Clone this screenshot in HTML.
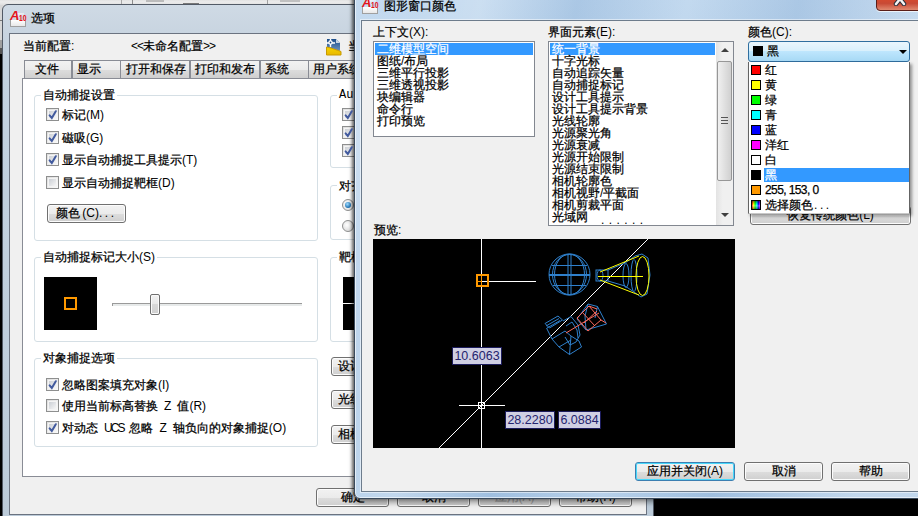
<!DOCTYPE html>
<html><head><meta charset="utf-8">
<style>
*{box-sizing:border-box}
html,body{margin:0;padding:0}
body{width:918px;height:516px;overflow:hidden;position:relative;background:#000;font-family:"Liberation Sans",sans-serif;font-size:12px;color:#000;-webkit-text-stroke:0.25px currentColor;word-spacing:2.7px}
.a{position:absolute}
.t{position:absolute;white-space:nowrap;line-height:12px;font-size:12px}
.gb{position:absolute;border:1px solid #d5dfe5;border-radius:3px}
.gl{position:absolute;background:#fff;padding:0 2px;line-height:12px;white-space:nowrap}
.cb{position:absolute;width:13px;height:13px;border:1px solid #8e8f8f;background:linear-gradient(135deg,#dcdcdc,#fbfbfb)}
.cb::after{content:"";position:absolute;left:1px;top:1px;right:1px;bottom:1px;border:1px solid #f4f4f4;background:linear-gradient(135deg,#cbcfd5,#f6f6f6)}
.cb.on svg{position:absolute;left:1px;top:1px;z-index:2}
.btn{position:absolute;height:19px;border:1px solid #707070;border-radius:3px;background:linear-gradient(#f2f2f2 0,#ebebeb 50%,#dddddd 51%,#cfcfcf 100%);box-shadow:inset 0 0 0 1px #fcfcfc;text-align:center;line-height:16px;white-space:nowrap}
.tab{position:absolute;top:60px;height:18px;border:1px solid #898c95;border-bottom:none;background:linear-gradient(#f2f2f2 0,#ebebeb 50%,#dddddd 51%,#cfcfcf 100%);line-height:16px;padding-left:10px;white-space:nowrap}
.lab{-webkit-text-stroke:0;height:18px;border:1px solid #1c1c5c;background:#cfcfe3;color:#24246e;font-size:12.5px;line-height:17px;text-align:center}
.l{-webkit-text-stroke:0}
.sw{position:absolute;width:10px;height:10px;border:1px solid #000}
</style></head><body>

<!-- background window strip on top -->
<div class="a" style="left:0;top:0;width:918px;height:5px;background:linear-gradient(#e2e2e2,#ececec 40%,#dedede)"></div>
<div class="a" style="left:121px;top:0;width:1px;height:5px;background:#a8a8a8"></div>
<div class="a" style="left:132px;top:0;width:1px;height:5px;background:#8c8c8c"></div>
<div class="a" style="left:267px;top:0;width:1px;height:5px;background:#a0a0a0"></div>
<div class="a" style="left:183px;top:3px;width:16px;height:1px;background:#777"></div>
<div class="a" style="left:146px;top:0;width:18px;height:2px;background:#bbb"></div>
<div class="a" style="left:280px;top:0;width:20px;height:2px;background:#c0c0c0"></div>
<div class="a" style="left:0;top:5px;width:30px;height:43px;background:#d6d6d6"></div><div class="a" style="left:0;top:20px;width:3px;height:1px;background:#777"></div><div class="a" style="left:0;top:40px;width:3px;height:8px;background:#a0a0a0"></div><div class="a" style="left:0;top:48px;width:3px;height:6px;background:#555"></div>

<!-- ================= LEFT DIALOG ================= -->
<div class="a" style="left:2px;top:4px;width:652px;height:520px;border:1px solid #525a66;border-radius:6px 6px 0 0;background:linear-gradient(#cfdae5,#c8d4e0 30px,#c3d2e0 60px,#bccbd9);"></div>
<!-- title -->
<div class="a" style="left:10px;top:11px;width:16px;height:16px">
  <div class="a" style="left:0;top:9px;width:16px;height:7px;background:linear-gradient(#fff,#e8e8e8);border:1px solid #a0a0a0;border-top:none"></div>
  <div class="a" style="left:5px;top:2px;width:9px;height:7px;background:linear-gradient(160deg,rgba(255,255,255,.9),rgba(255,255,255,0) 70%)"></div>
  <div class="a" style="left:0;top:-1px;font:italic bold 13px 'Liberation Sans',sans-serif;color:#e4141c;line-height:12px;-webkit-text-stroke:0">A</div>
  <div class="a" style="left:9px;top:3px;font-family:'Liberation Sans',sans-serif;font-weight:bold;font-size:9px;color:#e4141c;line-height:8px;transform:scaleX(.75);transform-origin:0 0;-webkit-text-stroke:0">10</div>
</div>
<div class="t" style="left:31px;top:12px">选项</div>
<!-- client -->
<div class="a" style="left:9px;top:33px;width:638px;height:482px;border:1px solid #6b7380;background:#f0f0f0"></div>

<div class="t" style="left:23px;top:40px">当前配置<span class="l">:</span></div>
<div class="t" style="left:131px;top:40px"><span class="l" style="letter-spacing:-1px">&lt;&lt;</span>未命名配置<span class="l" style="letter-spacing:-1px">&gt;&gt;</span></div>
<div class="t" style="left:348px;top:40px">当</div>
<svg class="a" style="left:326px;top:39px" width="16" height="17" viewBox="0 0 16 17"><defs><linearGradient id="bg1" x1="0" y1="0" x2="0" y2="1"><stop offset="0" stop-color="#1d4e8a"/><stop offset="1" stop-color="#6d93bf"/></linearGradient><linearGradient id="yg1" x1="0" y1="0" x2="0" y2="1"><stop offset="0" stop-color="#f7d400"/><stop offset="1" stop-color="#e8b800"/></linearGradient></defs><path d="M1 0 L10 0 L14 4 L14 12 L1 8 Z" fill="url(#bg1)"/><path d="M10 0 L14 4 L10 4 Z" fill="#c9d6e4"/><path d="M0 4 L9 4 M4.5 0 L4.5 8" stroke="#fff" stroke-width="1.4"/><circle cx="4.5" cy="3.5" r="2.2" fill="#fff"/><circle cx="4.5" cy="3.5" r="0.9" fill="#1d4e8a"/><path d="M0.5 8 L5 9 L15 12.5 L15 16 L0.5 16 Z" fill="url(#yg1)" stroke="#c89a00" stroke-width="1"/></svg>

<!-- tabs -->
<div class="tab" style="left:24px;width:48px;padding-left:10px">文件</div>
<div class="tab" style="left:72px;width:49px;padding-left:4px">显示</div>
<div class="tab" style="left:120px;width:70px;padding-left:5px">打开和保存</div>
<div class="tab" style="left:190px;width:70px;padding-left:4px">打印和发布</div>
<div class="tab" style="left:260px;width:49px;padding-left:4px">系统</div>
<div class="tab" style="left:308px;width:90px;padding-left:4px">用户系统配置</div>
<!-- tab page -->
<div class="a" style="left:22px;top:78px;width:620px;height:399px;border:1px solid #898c95;background:#fff"></div>

<!-- group 1 -->
<div class="gb" style="left:34px;top:95px;width:284px;height:146px"></div>
<div class="gl" style="left:41px;top:89px">自动捕捉设置</div>
<div class="cb on" style="left:46px;top:108px"><svg width="11" height="11" viewBox="0 0 11 11"><path d="M1.6 5.4 L3.8 8 L7.8 1.2" stroke="#425a9e" stroke-width="2" fill="none" stroke-linecap="round"/></svg></div>
<div class="t" style="left:62px;top:109px">标记<span class="l">(M)</span></div>
<div class="cb on" style="left:46px;top:131px"><svg width="11" height="11" viewBox="0 0 11 11"><path d="M1.6 5.4 L3.8 8 L7.8 1.2" stroke="#425a9e" stroke-width="2" fill="none" stroke-linecap="round"/></svg></div>
<div class="t" style="left:62px;top:132px">磁吸<span class="l">(G)</span></div>
<div class="cb on" style="left:46px;top:153px"><svg width="11" height="11" viewBox="0 0 11 11"><path d="M1.6 5.4 L3.8 8 L7.8 1.2" stroke="#425a9e" stroke-width="2" fill="none" stroke-linecap="round"/></svg></div>
<div class="t" style="left:62px;top:154px">显示自动捕捉工具提示<span class="l">(T)</span></div>
<div class="cb" style="left:46px;top:176px"></div>
<div class="t" style="left:62px;top:177px">显示自动捕捉靶框<span class="l">(D)</span></div>
<div class="btn" style="left:47px;top:204px;width:79px">颜色<span class="l" style="margin-left:2px">(C)</span><span class="l" style="letter-spacing:2.6px">...</span></div>

<!-- group 2 -->
<div class="gb" style="left:34px;top:257px;width:284px;height:85px"></div>
<div class="gl" style="left:41px;top:251px">自动捕捉标记大小<span class="l">(S)</span></div>
<div class="a" style="left:44px;top:277px;width:53px;height:53px;background:#000"></div>
<div class="a" style="left:64px;top:297px;width:13px;height:13px;border:2px solid #ff9900"></div>
<div class="a" style="left:112px;top:303px;width:190px;height:3px;border-top:1px solid #9a9a9a;border-left:1px solid #9a9a9a;background:#e7eaea"></div>
<div class="a" style="left:150px;top:294px;width:10px;height:21px;border:1px solid #6f6f6f;border-radius:2px;background:linear-gradient(#f2f2f2,#e8e8e8 45%,#d8d8d8 50%,#d0d0d0);box-shadow:inset 0 0 0 1px #fafafa"></div>

<!-- group 3 -->
<div class="gb" style="left:34px;top:358px;width:284px;height:89px"></div>
<div class="gl" style="left:41px;top:352px">对象捕捉选项</div>
<div class="cb on" style="left:46px;top:378px"><svg width="11" height="11" viewBox="0 0 11 11"><path d="M1.6 5.4 L3.8 8 L7.8 1.2" stroke="#425a9e" stroke-width="2" fill="none" stroke-linecap="round"/></svg></div>
<div class="t" style="left:62px;top:379px">忽略图案填充对象<span class="l">(I)</span></div>
<div class="cb" style="left:46px;top:399px"></div>
<div class="t" style="left:62px;top:400px">使用当前标高替换 <span class="l">Z</span> 值<span class="l">(R)</span></div>
<div class="cb on" style="left:46px;top:421px"><svg width="11" height="11" viewBox="0 0 11 11"><path d="M1.6 5.4 L3.8 8 L7.8 1.2" stroke="#425a9e" stroke-width="2" fill="none" stroke-linecap="round"/></svg></div>
<div class="t" style="left:62px;top:422px">对动态 <span class="l" style="letter-spacing:-2px">UCS</span> 忽略 <span class="l">Z</span> 轴负向的对象捕捉<span class="l">(O)</span></div>

<!-- right column groups -->
<div class="gb" style="left:330px;top:95px;width:120px;height:73px"></div>
<div class="gl" style="left:337px;top:89px;font-family:'Liberation Mono',monospace"><span class="l">AutoTrack</span> 设置</div>
<div class="cb on" style="left:342px;top:108px"><svg width="11" height="11" viewBox="0 0 11 11"><path d="M1.6 5.4 L3.8 8 L7.8 1.2" stroke="#425a9e" stroke-width="2" fill="none" stroke-linecap="round"/></svg></div>
<div class="cb on" style="left:342px;top:126px"><svg width="11" height="11" viewBox="0 0 11 11"><path d="M1.6 5.4 L3.8 8 L7.8 1.2" stroke="#425a9e" stroke-width="2" fill="none" stroke-linecap="round"/></svg></div>
<div class="cb on" style="left:342px;top:144px"><svg width="11" height="11" viewBox="0 0 11 11"><path d="M1.6 5.4 L3.8 8 L7.8 1.2" stroke="#425a9e" stroke-width="2" fill="none" stroke-linecap="round"/></svg></div>
<div class="gb" style="left:330px;top:185px;width:120px;height:55px"></div>
<div class="gl" style="left:337px;top:180px">对齐点获取</div>
<div class="a" style="left:342px;top:199px;width:12px;height:12px;border-radius:50%;border:1px solid #8e8f8f;background:radial-gradient(circle at 40% 40%,#fff,#d8d8d8)"><div class="a" style="left:2px;top:2px;width:6px;height:6px;border-radius:50%;background:radial-gradient(circle at 40% 35%,#9fdcff,#1c6fb0 70%,#0b4a80)"></div></div>
<div class="a" style="left:342px;top:220px;width:12px;height:12px;border-radius:50%;border:1px solid #8e8f8f;background:radial-gradient(circle at 40% 40%,#fff,#cfcfcf)"></div>
<div class="gb" style="left:330px;top:257px;width:120px;height:85px"></div>
<div class="gl" style="left:337px;top:251px">靶框大小<span class="l">(Z)</span></div>
<div class="a" style="left:343px;top:277px;width:53px;height:53px;background:#000"><div class="a" style="left:0;top:26px;width:53px;height:1px;background:#fff"></div></div>
<div class="btn" style="left:331px;top:357px;width:120px;text-align:left;padding-left:6px">设计工具提示设置<span class="l">(E)...</span></div>
<div class="btn" style="left:331px;top:390px;width:120px;text-align:left;padding-left:6px">光线轮廓设置<span class="l">(L)...</span></div>
<div class="btn" style="left:331px;top:425px;width:120px;text-align:left;padding-left:6px">相机轮廓设置<span class="l">(A)...</span></div>

<!-- bottom buttons -->
<div class="btn" style="left:316px;top:488px;width:73px">确定</div>
<div class="btn" style="left:397px;top:488px;width:73px">取消</div>
<div class="btn" style="left:478px;top:488px;width:73px;color:#a0a0a0">应用<span class="l">(A)</span></div>
<div class="btn" style="left:559px;top:488px;width:73px">帮助<span class="l">(H)</span></div>

<!-- ================= RIGHT DIALOG ================= -->
<div id="rd" class="a" style="left:354px;top:-30px;width:600px;height:529px;border:1px solid #3a4a5c;background:linear-gradient(100deg,rgba(255,255,255,.15) 10%,rgba(255,255,255,.25) 19%,rgba(60,110,170,.12) 33%,rgba(255,255,255,.12) 49%,rgba(60,110,170,.12) 65%,rgba(255,255,255,.25) 86%),linear-gradient(#bcd5ee,#b9d3ec 50px,#c8dcf0 130px,#b7d0ea 280px,#adcae7);border-radius:6px;box-shadow:-2px 0 3px rgba(0,0,0,.45),-1px 4px 5px rgba(0,0,0,.35),inset 0 0 0 1px rgba(255,255,255,.6)"></div>
<div class="a" style="left:361px;top:20px;width:600px;height:472px;border:1px solid #6d7c8c;background:#f0f0f0;box-shadow:0 0 0 1px rgba(255,255,255,.5)"></div>

<!-- title -->
<div class="a" style="left:362px;top:-2px;width:16px;height:16px">
  <div class="a" style="left:0;top:9px;width:16px;height:7px;background:linear-gradient(#fff,#e8e8e8);border:1px solid #a0a0a0;border-top:none"></div>
  <div class="a" style="left:5px;top:2px;width:9px;height:7px;background:linear-gradient(160deg,rgba(255,255,255,.9),rgba(255,255,255,0) 70%)"></div>
  <div class="a" style="left:0;top:-1px;font:italic bold 13px 'Liberation Sans',sans-serif;color:#e4141c;line-height:12px;-webkit-text-stroke:0">A</div>
  <div class="a" style="left:9px;top:3px;font-family:'Liberation Sans',sans-serif;font-weight:bold;font-size:9px;color:#e4141c;line-height:8px;transform:scaleX(.75);transform-origin:0 0;-webkit-text-stroke:0">10</div>
</div>
<div class="t" style="left:384px;top:0px">图形窗口颜色</div>
<div class="a" style="left:876px;top:-13px;width:60px;height:24px;border:1px solid #5a1e18;border-radius:0 0 4px 4px;background:linear-gradient(#e8a08a,#d24a30 55%,#c84a35 70%,#e08a70);box-shadow:0 1px 0 rgba(255,255,255,.7)"></div>
<svg class="a" style="left:893px;top:-7px" width="14" height="13" viewBox="0 0 14 13"><path d="M3 1 L11 11 M11 1 L3 11" stroke="#2a2f3a" stroke-width="4.5" stroke-linecap="round"/><path d="M3 1 L11 11 M11 1 L3 11" stroke="#f4f4f4" stroke-width="2.5" stroke-linecap="round"/></svg>

<div class="t" style="left:373px;top:26px">上下文<span class="l">(X):</span></div>
<div class="a" style="left:373px;top:41px;width:162px;height:96px;border:1px solid #828790;background:#fff"></div>
<div class="a" style="left:375px;top:43px;width:158px;height:12px;background:#3399ff"></div>
<div class="t" style="left:377px;top:43px;color:#fff">二维模型空间</div>
<div class="t" style="left:377px;top:55px">图纸<span class="l">/</span>布局</div>
<div class="t" style="left:377px;top:67px">三维平行投影</div>
<div class="t" style="left:377px;top:79px">三维透视投影</div>
<div class="t" style="left:377px;top:91px">块编辑器</div>
<div class="t" style="left:377px;top:103px">命令行</div>
<div class="t" style="left:377px;top:115px">打印预览</div>

<div class="t" style="left:548px;top:26px">界面元素<span class="l">(E):</span></div>
<div class="a" style="left:548px;top:41px;width:186px;height:185px;border:1px solid #828790;background:#fff"></div>
<div class="a" style="left:550px;top:43px;width:165px;height:12px;background:#3399ff"></div>
<div class="t" style="left:552px;top:43px;color:#fff">统一背景</div>
<div class="t" style="left:552px;top:55px">十字光标</div>
<div class="t" style="left:552px;top:67px">自动追踪矢量</div>
<div class="t" style="left:552px;top:79px">自动捕捉标记</div>
<div class="t" style="left:552px;top:91px">设计工具提示</div>
<div class="t" style="left:552px;top:103px">设计工具提示背景</div>
<div class="t" style="left:552px;top:115px">光线轮廓</div>
<div class="t" style="left:552px;top:127px">光源聚光角</div>
<div class="t" style="left:552px;top:139px">光源衰减</div>
<div class="t" style="left:552px;top:151px">光源开始限制</div>
<div class="t" style="left:552px;top:163px">光源结束限制</div>
<div class="t" style="left:552px;top:175px">相机轮廓色</div>
<div class="t" style="left:552px;top:187px">相机视野<span class="l">/</span>平截面</div>
<div class="t" style="left:552px;top:199px">相机剪裁平面</div>
<div class="t" style="left:552px;top:211px">光域网</div><div class="t l" style="left:601px;top:214px;letter-spacing:4.4px;height:11px;overflow:hidden">......</div>
<!-- scrollbar -->
<div class="a" style="left:716px;top:42px;width:17px;height:183px;background:linear-gradient(90deg,#e3e3e3,#f0f0f0 40%,#f0f0f0)"></div>
<div class="a" style="left:721px;top:48px;width:0;height:0;border-left:4px solid transparent;border-right:4px solid transparent;border-bottom:4px solid #404040"></div>
<div class="a" style="left:717px;top:61px;width:15px;height:120px;border:1px solid #979797;border-radius:2px;background:linear-gradient(90deg,#f0f0f0,#e0e0e0 50%,#d0d0d0)"></div>
<div class="a" style="left:721px;top:117px;width:7px;height:7px;border-top:1px solid #555;border-bottom:1px solid #555"><div class="a" style="left:0;top:2px;width:7px;height:1px;background:#555"></div></div>
<div class="a" style="left:721px;top:213px;width:0;height:0;border-left:4px solid transparent;border-right:4px solid transparent;border-top:4px solid #404040"></div>

<div class="t" style="left:748px;top:26px">颜色<span class="l">(C):</span></div>
<!-- button behind dropdown -->
<div class="btn" style="left:750px;top:206px;width:161px">恢复传统颜色<span class="l">(L)</span></div>

<!-- combobox -->
<div class="a" style="left:748px;top:41px;width:162px;height:21px;border:1px solid #2f6e9f;border-radius:3px;background:linear-gradient(#eaf6fd 0,#d9f0fc 45%,#bee6fd 50%,#a7d9f5 100%)"></div>
<div class="sw" style="left:753px;top:46px;background:#000"></div>
<div class="t" style="left:767px;top:45px">黑</div>
<div class="a" style="left:899px;top:50px;width:0;height:0;border-left:4px solid transparent;border-right:4px solid transparent;border-top:4px solid #000"></div>
<!-- dropdown -->
<div class="a" style="left:748px;top:62px;width:162px;height:152px;border:1px solid #646464;border-top:none;border-bottom-color:#c8c8c8;background:#fff;box-shadow:2px 2px 3px rgba(0,0,0,.4)"></div>
<div class="sw" style="left:751px;top:65px;background:#ff0000"></div><div class="t" style="left:765px;top:64px">红</div>
<div class="sw" style="left:751px;top:80px;background:#ffff00"></div><div class="t" style="left:765px;top:79px">黄</div>
<div class="sw" style="left:751px;top:95px;background:#00ff00"></div><div class="t" style="left:765px;top:94px">绿</div>
<div class="sw" style="left:751px;top:110px;background:#00ffff"></div><div class="t" style="left:765px;top:109px">青</div>
<div class="sw" style="left:751px;top:125px;background:#0000ff"></div><div class="t" style="left:765px;top:124px">蓝</div>
<div class="sw" style="left:751px;top:140px;background:#ff00ff"></div><div class="t" style="left:765px;top:139px">洋红</div>
<div class="sw" style="left:751px;top:155px;background:#ffffff"></div><div class="t" style="left:765px;top:154px">白</div>
<div class="a" style="left:764px;top:168px;width:145px;height:14px;background:#3399ff"></div>
<div class="sw" style="left:751px;top:170px;background:#000"></div><div class="t" style="left:765px;top:169px;color:#fff">黑</div>
<div class="sw" style="left:751px;top:185px;background:#ff9900"></div><div class="t" style="left:765px;top:184px;letter-spacing:-0.6px;word-spacing:0">255, 153, 0</div>
<div class="sw" style="left:751px;top:200px;background:linear-gradient(rgba(0,0,0,.5),rgba(0,0,0,0) 40%,rgba(255,255,255,.3) 60%,rgba(0,0,0,.4)),linear-gradient(90deg,#f00,#ff0,#0f0,#0ff,#00f,#f0f)"></div><div class="t" style="left:765px;top:199px">选择颜色<span class="l" style="letter-spacing:2.6px;margin-left:1px">...</span></div>

<!-- preview -->
<div class="t" style="left:374px;top:224px">预览<span class="l">:</span></div>
<div class="a" style="left:373px;top:239px;width:362px;height:209px;background:#000;overflow:hidden">
<svg width="362" height="209" viewBox="373 239 362 209" style="position:absolute;left:0;top:0" shape-rendering="crispEdges">
  <line x1="481.5" y1="239" x2="481.5" y2="448" stroke="#fff" stroke-width="1"/>
  <line x1="482" y1="281.5" x2="536" y2="281.5" stroke="#fff" stroke-width="1"/>
  <line x1="459" y1="405.5" x2="505" y2="405.5" stroke="#fff" stroke-width="1"/>
  <rect x="478.5" y="402.5" width="6" height="6" fill="none" stroke="#fff"/>
  <rect x="477" y="275" width="11" height="11" fill="none" stroke="#ff9900" stroke-width="2"/>
  <line x1="481.5" y1="275" x2="481.5" y2="286" stroke="#ff9900" stroke-width="1"/>
  <line x1="477" y1="281.5" x2="482" y2="281.5" stroke="#ff9900" stroke-width="1"/>
</svg>
<svg width="362" height="209" viewBox="373 239 362 209" style="position:absolute;left:0;top:0">
  <line x1="439" y1="448" x2="649" y2="238" stroke="#fff" stroke-width="1"/>
  <g fill="none" stroke="#2f80cc" stroke-width="1">
    <circle cx="569.5" cy="274.5" r="20.5"/>
    <ellipse cx="569.5" cy="274.5" rx="15" ry="20.5"/>
    <ellipse cx="569.5" cy="274.5" rx="17" ry="20"/>
    <line x1="552" y1="265.5" x2="587" y2="265.5"/>
    <line x1="549" y1="275" x2="590" y2="275" stroke-width="2"/>
    <line x1="553" y1="285.5" x2="586" y2="285.5"/>
    <line x1="568" y1="254" x2="568" y2="295"/>
    <line x1="571" y1="254" x2="571" y2="295"/>
    <rect x="596" y="270" width="12" height="11"/>
    <ellipse cx="600" cy="275.5" rx="3" ry="5.5"/>
    <path d="M608 270 L625 263 L635 256 L642 254 L648 258 L650 275 L647 294 L641 297 L634 292 L625 286 L608 281"/>
    <ellipse cx="626" cy="275.5" rx="3" ry="12"/>
    <ellipse cx="634" cy="275.5" rx="3" ry="16"/>
  </g>
  <g fill="none" stroke="#ffff00" stroke-width="1">
    <path d="M600 272 L639 256 M600 280 L639 295"/>
    <ellipse cx="642.5" cy="276" rx="6.5" ry="19.5"/>
    <line x1="598" y1="276.5" x2="643" y2="276.5"/>
  </g>
  <g fill="none" stroke="#2f80cc" stroke-width="1">
    <path d="M545 323.5 L558 316 L562.5 320 L549.5 328 Z"/>
    <path d="M546 326 L559 318.5 M547 328 L560 320.5"/>
    <path d="M546.5 328 L552 339 L559 347 L569.5 354.5 L581.5 347 L579 341 L571 336"/>
    <path d="M552 339 L565 331 L571 336 L569.5 354.5 M559 347 L571 340"/>
    <path d="M563 321 L571 316.5 L578 325 L580 335 L576 342 L570 345 L565 337"/>
    <path d="M566 326 L572 322 L577 330 L578 338"/>
    <path d="M588 304 L597.5 306.5 L606.5 324 L586 330 L577 319 Z"/>
    <path d="M588 304 L585 316 L586 330 M597.5 306.5 L595 318"/>
  </g>
  <g fill="none" stroke="#ff6b5e" stroke-width="1">
    <path d="M577 318 L589 306 L601 320 L588 331 Z"/>
    <path d="M566 333 L599 313 M582 312 L595 326 M584 323 L597 311 M589 306 L597 309 M601 320 L606 323"/>
  </g>
</svg>
<div class="a lab" style="left:79px;top:108px;width:50px">10.6063</div>
<div class="a lab" style="left:132px;top:172px;width:50px">28.2280</div>
<div class="a lab" style="left:185px;top:172px;width:43px">6.0884</div>
</div>

<div class="btn" style="left:635px;top:462px;width:100px;border-color:#3c7fb1;box-shadow:inset 0 0 0 1px #48d8fb">应用并关闭<span class="l">(A)</span></div>
<div class="btn" style="left:744px;top:462px;width:79px">取消</div>
<div class="btn" style="left:831px;top:462px;width:79px">帮助</div>
</body></html>
